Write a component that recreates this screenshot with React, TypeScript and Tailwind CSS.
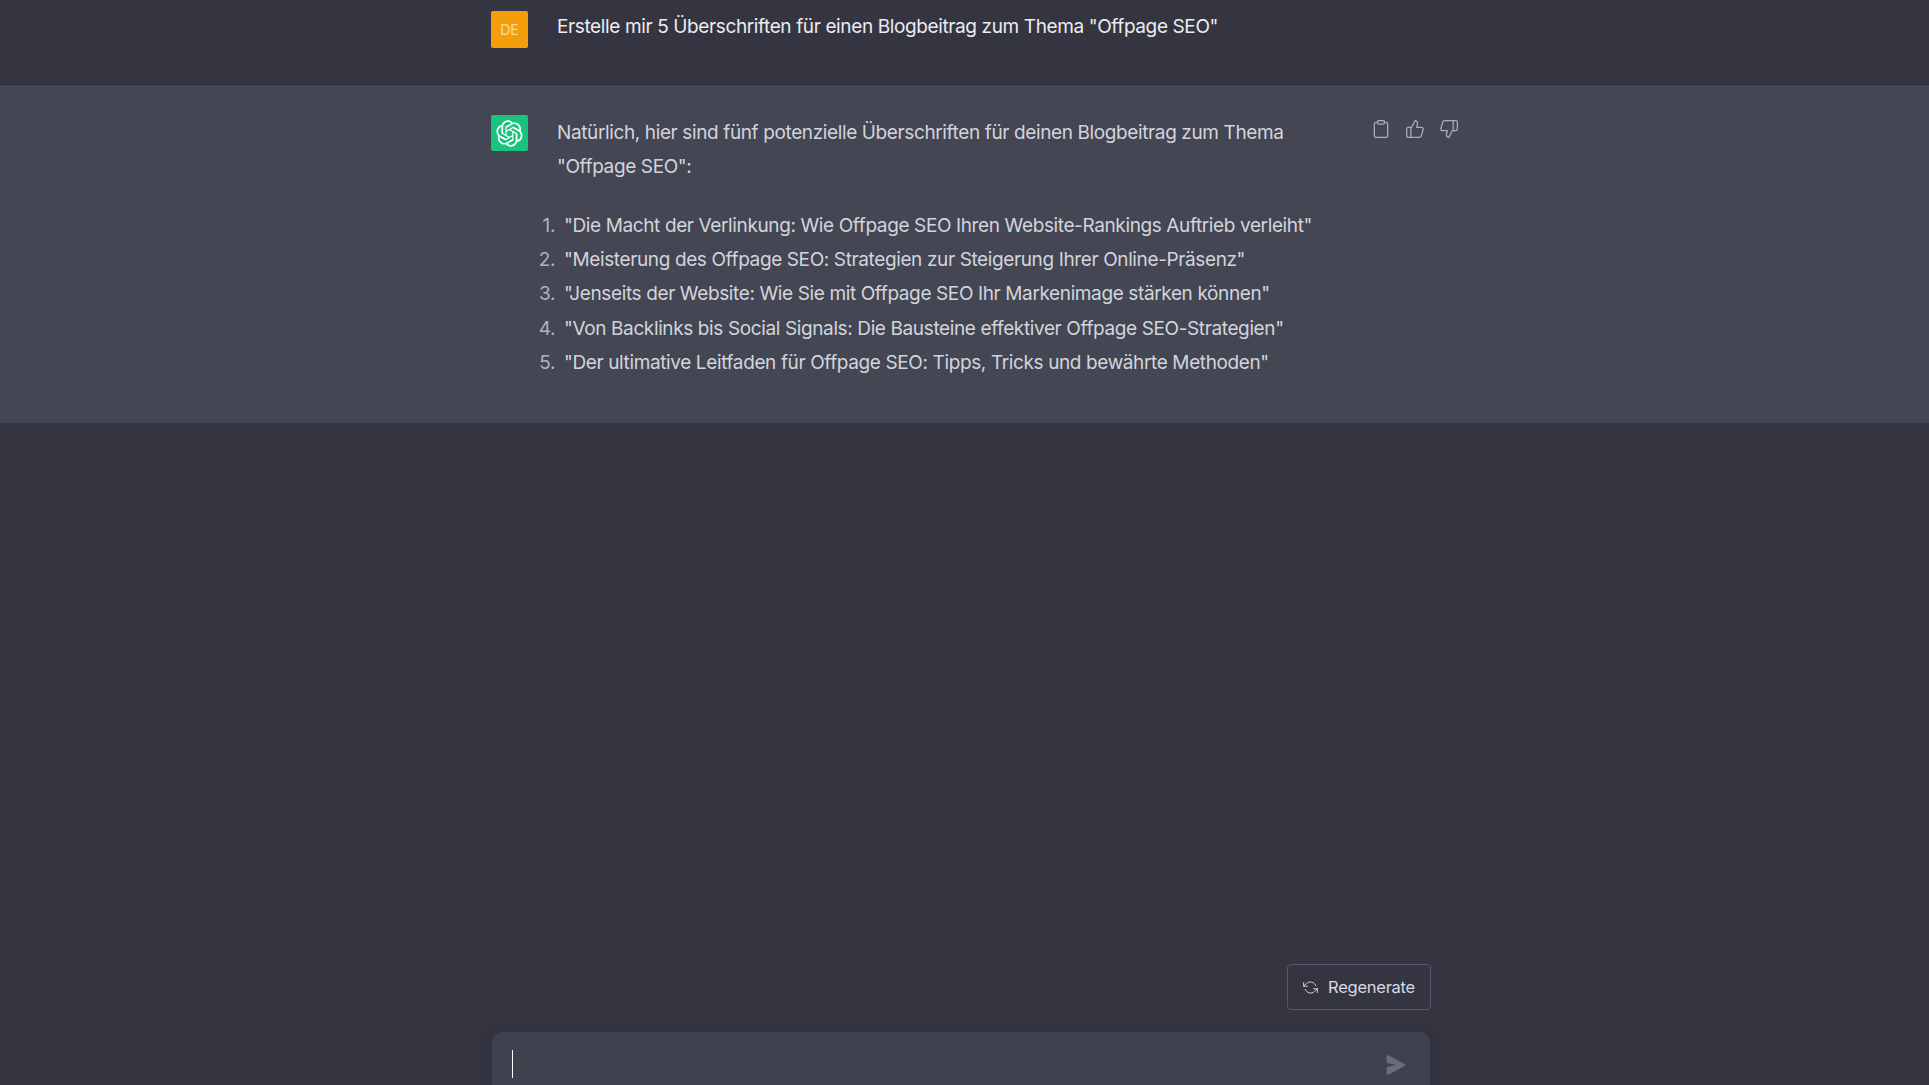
import { Clipboard, ThumbsDown, ThumbsUp } from "lucide-react";

const headlines = [
  '"Die Macht der Verlinkung: Wie Offpage SEO Ihren Website-Rankings Auftrieb verleiht"',
  '"Meisterung des Offpage SEO: Strategien zur Steigerung Ihrer Online-Präsenz"',
  '"Jenseits der Website: Wie Sie mit Offpage SEO Ihr Markenimage stärken können"',
  '"Von Backlinks bis Social Signals: Die Bausteine effektiver Offpage SEO-Strategien"',
  '"Der ultimative Leitfaden für Offpage SEO: Tipps, Tricks und bewährte Methoden"',
];

function OpenAiLogo() {
  return (
    <svg viewBox="0 0 41 41" fill="none" className="w-[27px] h-[27px]">
      <path
        fill="currentColor"
        d="M37.5324 16.8707C37.9808 15.5241 38.1363 14.0974 37.9886 12.6859C37.8409 11.2744 37.3934 9.91076 36.676 8.68622C35.6126 6.83404 33.9882 5.3676 32.0373 4.4985C30.0864 3.62941 27.9098 3.40259 25.8215 3.85078C24.8796 2.7893 23.7219 1.94125 22.4257 1.36341C21.1295 0.785575 19.7249 0.491269 18.3058 0.500197C16.1708 0.495044 14.0893 1.16803 12.3614 2.42214C10.6335 3.67624 9.34853 5.44666 8.6917 7.47815C7.30085 7.76286 5.98686 8.3414 4.8377 9.17505C3.68854 10.0087 2.73073 11.0782 2.02839 12.312C0.956464 14.1591 0.498905 16.2988 0.721698 18.4228C0.944492 20.5467 1.83612 22.5449 3.268 24.1293C2.81966 25.4759 2.66413 26.9026 2.81182 28.3141C2.95951 29.7256 3.40701 31.0892 4.12437 32.3138C5.18791 34.1659 6.8123 35.6322 8.76321 36.5013C10.7141 37.3704 12.8907 37.5973 14.9789 37.1492C15.9208 38.2107 17.0786 39.0587 18.3747 39.6366C19.6709 40.2144 21.0755 40.5087 22.4946 40.4998C24.6307 40.5054 26.7133 39.8321 28.4418 38.5772C30.1704 37.3223 31.4556 35.5506 32.1119 33.5179C33.5027 33.2332 34.8167 32.6547 35.9659 31.821C37.115 30.9874 38.0728 29.9178 38.7752 28.684C39.8458 26.8371 40.3023 24.6979 40.0789 22.5748C39.8556 20.4517 38.9639 18.4544 37.5324 16.8707ZM22.4978 37.8849C20.7443 37.8874 19.0459 37.2733 17.6994 36.1501C17.7601 36.117 17.8666 36.0586 17.936 36.0161L25.9004 31.4156C26.1003 31.3019 26.2663 31.137 26.3813 30.9378C26.4964 30.7386 26.5563 30.5124 26.5549 30.2825V19.0542L29.9213 20.998C29.9389 21.0068 29.9541 21.0198 29.9656 21.0359C29.977 21.052 29.9842 21.0707 29.9867 21.0902V30.3889C29.9842 32.375 29.1946 34.2791 27.7909 35.6841C26.3872 37.0892 24.4838 37.8806 22.4978 37.8849ZM6.39227 31.0064C5.51397 29.4888 5.19742 27.7107 5.49804 25.9832C5.55718 26.0187 5.66048 26.0818 5.73461 26.1244L13.699 30.7248C13.8975 30.8408 14.1233 30.902 14.3532 30.902C14.583 30.902 14.8088 30.8408 15.0073 30.7248L24.731 25.1103V28.9979C24.7321 29.0177 24.7283 29.0376 24.7199 29.0556C24.7115 29.0736 24.6988 29.0893 24.6829 29.1012L16.6317 33.7497C14.9096 34.7416 12.8643 35.0097 10.9447 34.4954C9.02506 33.9811 7.38785 32.7263 6.39227 31.0064ZM4.29707 13.6194C5.17156 12.0998 6.55279 10.9364 8.19885 10.3327C8.19885 10.4013 8.19491 10.5228 8.19491 10.6071V19.808C8.19351 20.0378 8.25334 20.2638 8.36823 20.4629C8.48312 20.6619 8.64893 20.8267 8.84863 20.9404L18.5723 26.5542L15.206 28.4979C15.1894 28.5089 15.1703 28.5155 15.1505 28.5173C15.1307 28.5191 15.1107 28.516 15.0924 28.5082L7.04046 23.8557C5.32135 22.8601 4.06716 21.2235 3.55289 19.3046C3.03862 17.3858 3.30624 15.3413 4.29707 13.6194ZM31.955 20.0556L22.2312 14.4411L25.5976 12.4981C25.6142 12.4872 25.6333 12.4805 25.6531 12.4787C25.6729 12.4769 25.6928 12.4801 25.7111 12.4879L33.7631 17.1364C34.9967 17.849 36.0017 18.8982 36.6606 20.1613C37.3194 21.4244 37.6047 22.849 37.4832 24.2684C37.3617 25.6878 36.8382 27.0432 35.9743 28.1759C35.1103 29.3086 33.9415 30.1717 32.6047 30.6641C32.6047 30.5947 32.6047 30.4733 32.6047 30.3889V21.188C32.6066 20.9586 32.5474 20.7328 32.4332 20.5338C32.319 20.3348 32.154 20.1698 31.955 20.0556ZM35.3055 15.0128C35.2464 14.9765 35.1431 14.9142 35.069 14.8717L27.1045 10.2712C26.906 10.1554 26.6803 10.0943 26.4504 10.0943C26.2206 10.0943 25.9948 10.1554 25.7963 10.2712L16.0726 15.8858V11.9982C16.0715 11.9783 16.0753 11.9585 16.0837 11.9405C16.0921 11.9225 16.1048 11.9068 16.1207 11.8949L24.1719 7.25025C25.4053 6.53903 26.8158 6.19376 28.2383 6.25482C29.6608 6.31589 31.0364 6.78077 32.2044 7.59508C33.3723 8.40939 34.2842 9.53945 34.8334 10.8531C35.3826 12.1667 35.5464 13.6095 35.3055 15.0128ZM14.2424 21.9419L10.8752 19.9981C10.8576 19.9893 10.8423 19.9763 10.8309 19.9602C10.8195 19.9441 10.8122 19.9254 10.8098 19.9058V10.6071C10.8107 9.18295 11.2173 7.78848 11.9819 6.58696C12.7466 5.38544 13.8377 4.42659 15.1275 3.82264C16.4173 3.21869 17.8524 2.99464 19.2649 3.1767C20.6775 3.35876 22.0089 3.93941 23.1034 4.85067C23.0427 4.88379 22.937 4.94215 22.8668 4.98473L14.9024 9.58517C14.7025 9.69878 14.5366 9.86356 14.4215 10.0626C14.3065 10.2616 14.2466 10.4877 14.2479 10.7175L14.2424 21.9419ZM16.071 17.9991L20.4018 15.4978L24.7325 17.9975V22.9985L20.4018 25.4983L16.071 22.9985V17.9991Z"
      />
    </svg>
  );
}

function RefreshIcon() {
  return (
    <svg
      viewBox="0 0 24 24"
      fill="none"
      stroke="currentColor"
      strokeWidth="1.5"
      strokeLinecap="round"
      strokeLinejoin="round"
      className="w-[15px] h-[15px]"
    >
      <polyline points="1 4 1 10 7 10" />
      <polyline points="23 20 23 14 17 14" />
      <path d="M20.49 9A9 9 0 0 0 5.64 5.64L1 10m22 4l-4.64 4.36A9 9 0 0 1 3.51 15" />
    </svg>
  );
}

export default function App() {
  return (
    <div className="h-screen overflow-hidden flex flex-col bg-[#343541] font-['Inter',sans-serif] text-[19px] leading-[34px] tracking-[-0.38px]">
      {/* User message */}
      <div className="h-[85px] shrink-0 border-b border-[#2b2c33] pl-[491px] pt-[11px] flex gap-[29px] text-[#ececf1]">
        <div className="w-[37px] h-[37px] rounded-[2px] bg-[#f59e0b] text-[#fcd9a0] text-[14px] tracking-normal flex items-center justify-center shrink-0">
          DE
        </div>
        <p className="-mt-[1px]">Erstelle mir 5 Überschriften für einen Blogbeitrag zum Thema "Offpage SEO"</p>
      </div>

      {/* Assistant message */}
      <div className="h-[338px] shrink-0 bg-[#444654] pl-[491px] pt-[30px] flex gap-[29px] text-[#d1d5db]">
        <div className="w-[37px] h-[36px] rounded-[2px] bg-[#19c37d] text-white flex items-center justify-center shrink-0">
          <OpenAiLogo />
        </div>
        <div className="w-[755px] shrink-0 pt-[1px]">
          <p>
            Natürlich, hier sind fünf potenzielle Überschriften für deinen Blogbeitrag zum Thema "Offpage SEO":
          </p>
          <ol className="mt-[25px]">
            {headlines.map((headline, index) => (
              <li key={index} className="flex gap-[9px] -ml-[26px] leading-[34.2px]">
                <span className="w-[24px] text-right text-[#b0b3bd] shrink-0">{index + 1}.</span>
                <span className="whitespace-nowrap">{headline}</span>
              </li>
            ))}
          </ol>
        </div>
        <div className="flex gap-[14px] ml-[30px] mt-[4px] h-[20px] text-[#acacbe]">
          <Clipboard size={20} strokeWidth={1.5} />
          <ThumbsUp size={20} strokeWidth={1.5} />
          <ThumbsDown size={20} strokeWidth={1.5} />
        </div>
      </div>

      {/* Bottom composer */}
      <div className="flex-1 flex flex-col justify-end items-end pr-[498px]">
        <button className="w-[144px] h-[46px] border border-[#565869] rounded-[4px] flex items-center justify-center gap-[10px] text-[16.5px] tracking-[-0.25px] text-[#d9d9e3]">
          <RefreshIcon />
          Regenerate
        </button>
        <div className="w-[938px] h-[54px] mt-[22px] mr-[1px] -mb-px bg-[#40414f] rounded-t-[10px] shadow-[0_0_15px_rgba(0,0,0,0.1)] flex items-start justify-between pl-[20px] pr-[24px] pt-[18px]">
          <div className="w-px h-[28px] bg-white" />
          <svg viewBox="0 0 16 16" fill="none" className="w-[20px] h-[20px] mt-[5px] text-[#6b6c7b]">
            <path
              fill="currentColor"
              d="M.5 1.163A1 1 0 0 1 1.97.28l12.868 6.837a1 1 0 0 1 0 1.766L1.969 15.72A1 1 0 0 1 .5 14.836V10.33a1 1 0 0 1 .816-.983L8.5 8 1.316 6.653A1 1 0 0 1 .5 5.67V1.163Z"
            />
          </svg>
        </div>
      </div>
    </div>
  );
}
